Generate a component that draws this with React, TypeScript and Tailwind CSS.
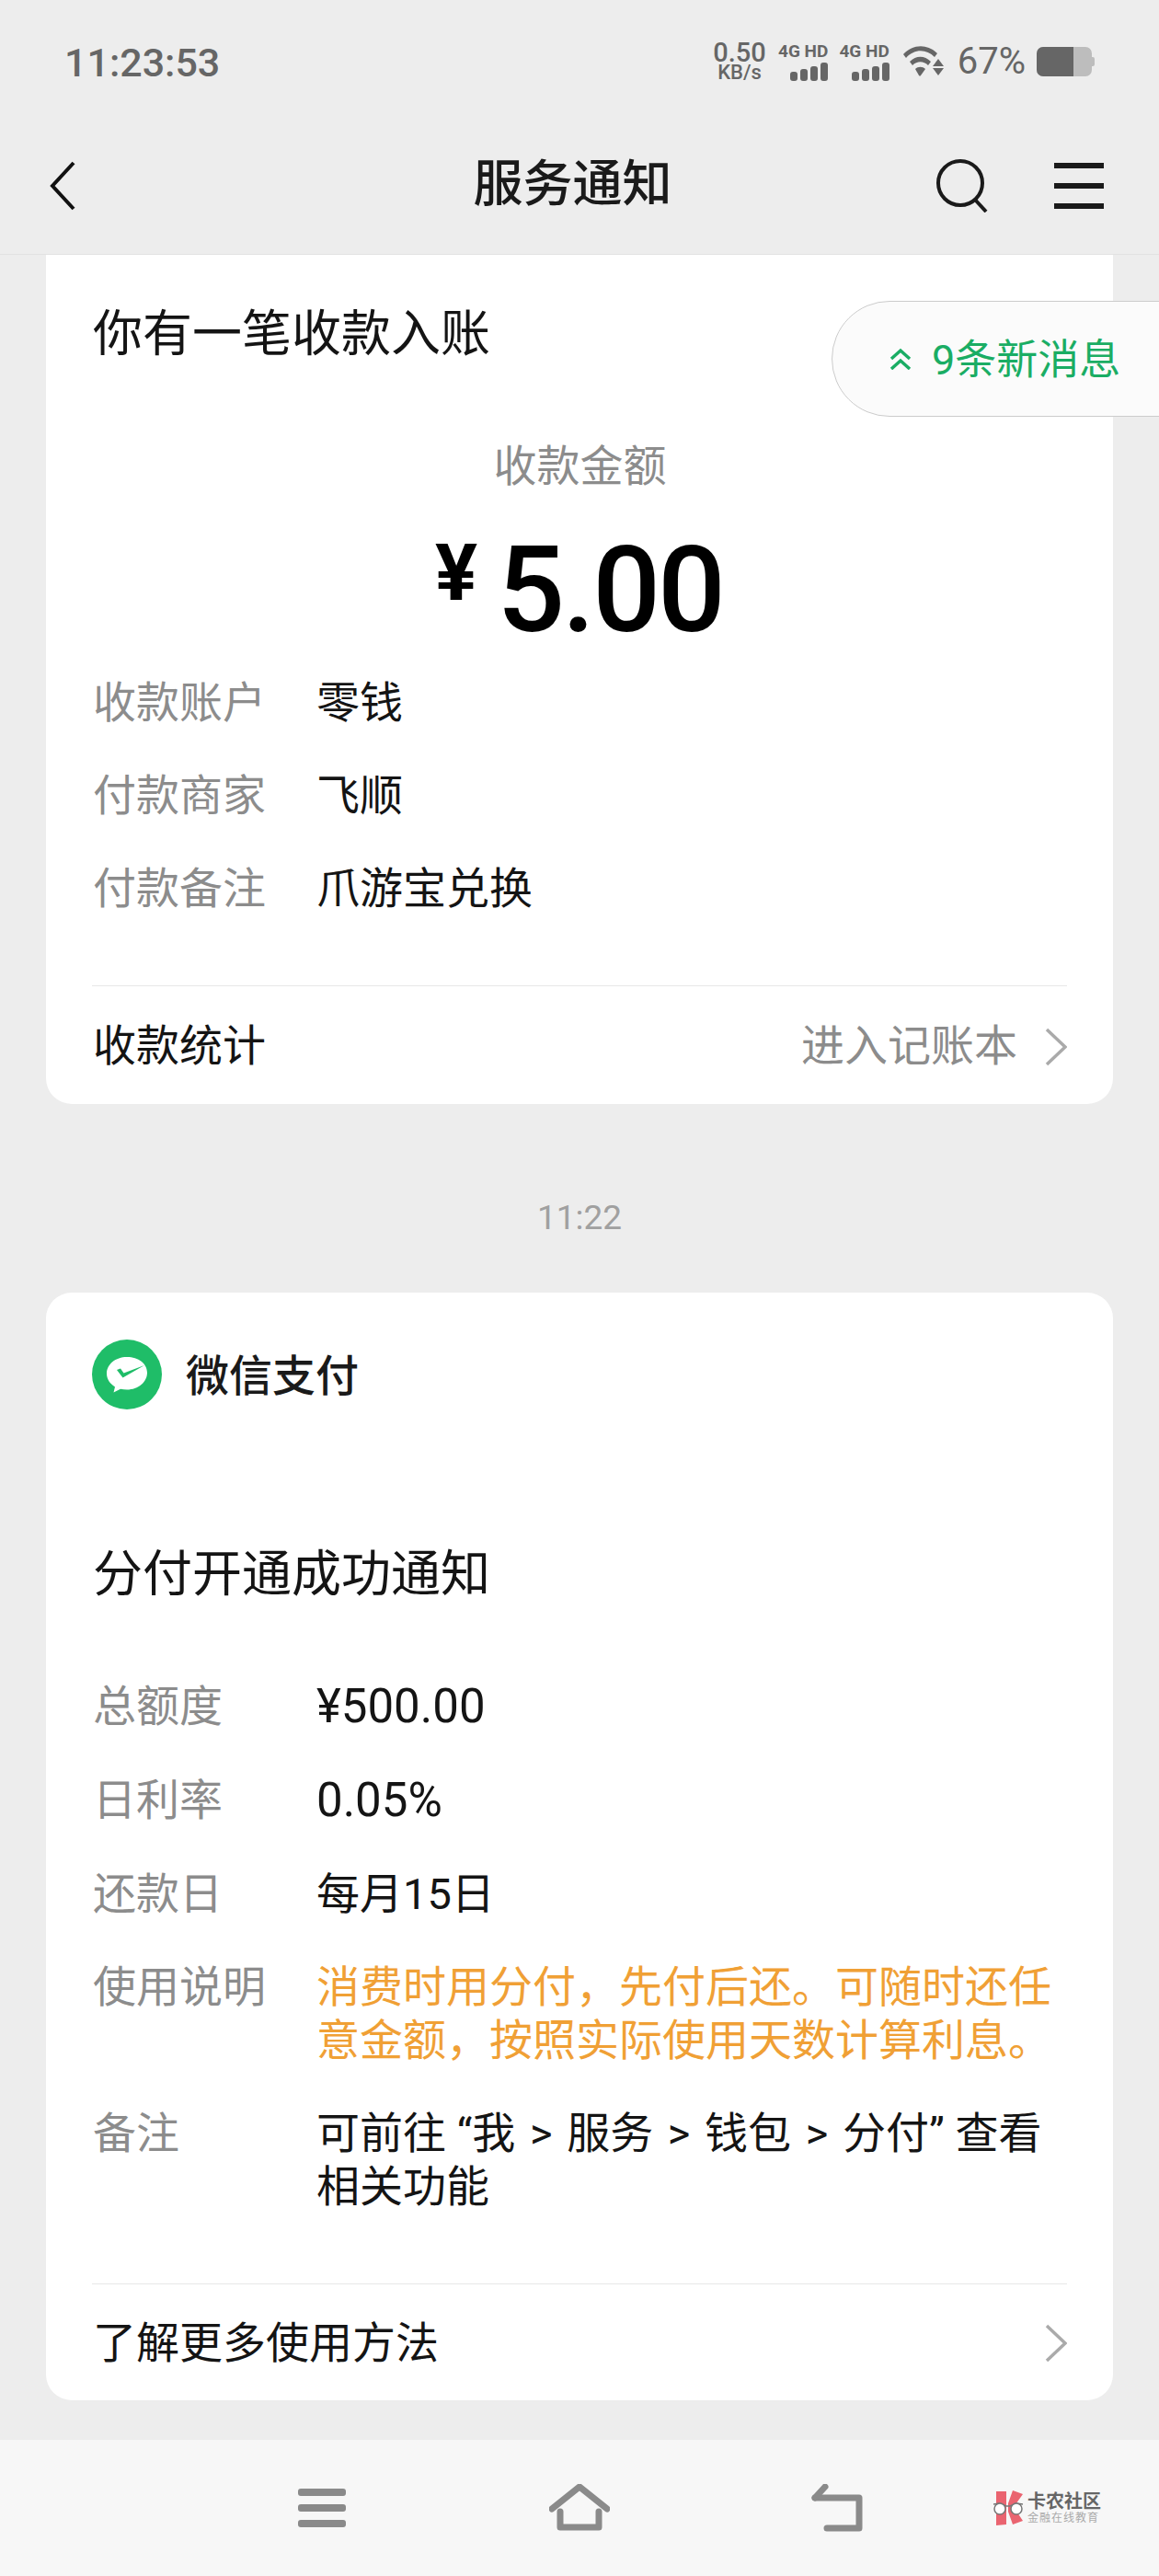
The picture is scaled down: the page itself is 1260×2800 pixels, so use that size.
const cjk = "font-['Roboto','Noto_Sans_CJK_SC',sans-serif]";

function Chevron() {
  return (
    <svg width="24" height="42" viewBox="0 0 24 42" fill="none">
      <path d="M2 2l20 19L2 40" stroke="#aaaaaa" strokeWidth="3.5" />
    </svg>
  );
}

function Signal() {
  return (
    <div className="flex flex-col items-end">
      <span className="text-[19px] leading-[18px] font-bold text-[#666] whitespace-nowrap">4G HD</span>
      <div className="flex items-end gap-[3px] mt-[3px] h-[20px]">
        <span className="w-[8px] h-[10px] rounded-[3px] bg-[#666]" />
        <span className="w-[8px] h-[13px] rounded-[3px] bg-[#666]" />
        <span className="w-[8px] h-[16px] rounded-[3px] bg-[#666]" />
        <span className="w-[8px] h-[20px] rounded-[3px] bg-[#666]" />
      </div>
    </div>
  );
}

function StatusBar() {
  return (
    <div className="h-[134px] flex items-center justify-between pl-[70px] pr-[70px]">
      <span className="text-[43px] font-medium text-[#666] mt-[2px]">11:23:53</span>
      <div className="flex items-center text-[#666]">
        <div className="flex flex-col items-center w-[58px]">
          <span className="text-[29px] leading-[24px] font-medium">0.50</span>
          <span className="text-[22px] leading-[20px] font-medium">KB/s</span>
        </div>
        <div className="ml-[13px]"><Signal /></div>
        <div className="ml-[12px]"><Signal /></div>
        <svg className="ml-[15px]" width="44" height="34" viewBox="0 0 44 34" fill="#666">
          <path d="M0 9C10-2 26-3 37 8l-3 4C25 3 12 3 3 13z" />
          <path d="M7 17c7-7 16-7 23 0l-3 4c-5-5-12-5-17 0z" />
          <path d="M13 25c3-3 8-3 11 0l-5 7c-1 1-1 1-2 0z" />
          <path d="M38 14l6 8H32zM32 24h12l-6 8z" />
        </svg>
        <span className="ml-[15px] text-[40px] leading-none">67%</span>
        <div className="ml-[12px] flex items-center">
          <div className="w-[60px] h-[32px] rounded-[7px] bg-[#bdbdbd] overflow-hidden">
            <div className="w-[40px] h-full bg-[#666]" />
          </div>
          <div className="w-[3px] h-[10px] rounded-r-[2px] bg-[#bdbdbd]" />
        </div>
      </div>
    </div>
  );
}

function Header() {
  return (
    <div className="h-[143px] shrink-0 border-b border-[#e2e2e2] flex items-center pl-[54px] pr-[60px]">
      <svg width="28" height="54" viewBox="0 0 28 54" fill="none" className="-mt-[6px]">
        <path d="M26 2L3 27l23 25" stroke="#111" strokeWidth="4" />
      </svg>
      <div className="flex-1 text-center text-[54px] leading-none font-medium text-[#1a1a1a] -mt-[8px] pl-[146px]">服务通知</div>
      <svg width="58" height="58" viewBox="0 0 58 58" fill="none" className="-mt-[6px]">
        <circle cx="27" cy="26" r="24" stroke="#1a1a1a" strokeWidth="4" />
        <path d="M43 44l12 13" stroke="#1a1a1a" strokeWidth="4" />
      </svg>
      <div className="ml-[71px] w-[54px] h-[50px] flex flex-col justify-between -mt-[6px]">
        <span className="h-[6px] bg-[#1a1a1a]" />
        <span className="h-[6px] bg-[#1a1a1a]" />
        <span className="h-[6px] bg-[#1a1a1a]" />
      </div>
    </div>
  );
}

function Row({ label, children, orange }: { label: string; children: React.ReactNode; orange?: boolean }) {
  return (
    <div className="grid grid-cols-[243px_1fr] text-[47px] leading-[58px]">
      <span className="text-[#8c8c8c]">{label}</span>
      <span className={orange ? "text-[#f0a035]" : "text-[#141414]"}>{children}</span>
    </div>
  );
}

function WechatPay() {
  return (
    <svg width="76" height="76" viewBox="0 0 76 76">
      <circle cx="38" cy="38" r="38" fill="#1fbd68" />
      <path d="M38 19c-12.500 0-22 8-22 18 0 6 3.500 11 9 14.500l-1.500 6 7.500-3.700c2.300.500 4.600.700 7 .700 12.500 0 22-8.500 22-18.500S50.500 19 38 19z" fill="#fff" />
      <path d="M27 33l4-1.500 3.500 5L57 28 33.500 41.500z" fill="#1fbd68" />
    </svg>
  );
}

function Logo() {
  return (
    <div className="flex items-center">
      <svg width="36" height="38" viewBox="0 0 36 38">
        <path d="M5 1h11v36L5 38zM18 14L23 0l11 4-10 14 10 15-11 4-5-14z" fill="#ea6470" />
        <path d="M2 15l7-1 7 3 4 0 7-3 7 1" fill="none" stroke="#777" strokeWidth="1.500" />
        <circle cx="9" cy="20" r="6" fill="#fff" stroke="#777" strokeWidth="1.500" />
        <circle cx="27" cy="20" r="6" fill="#fff" stroke="#777" strokeWidth="1.500" />
      </svg>
      <div className="ml-[3px] flex flex-col items-start">
        <span className="text-[20px] leading-[21px] font-bold text-[#666]">卡农社区</span>
        <span className="text-[12px] leading-[14px] tracking-[1px] text-[#aaa]">金融在线教育</span>
      </div>
    </div>
  );
}

const Arrow = () => <span className="[word-spacing:4px]"> &gt; </span>;

export default function App() {
  return (
    <div className={`${cjk} relative w-[1260px] h-[2800px] bg-[#ededed] flex flex-col overflow-hidden`}>
      <StatusBar />
      <Header />

      <div className="flex-1 px-[50px]">
        <div className="bg-white rounded-b-[28px] pt-[57px] pl-[51px] pr-[50px]">
          <div className="text-[54px] leading-[60px] text-[#141414]">你有一笔收款入账</div>
          <div className="mt-[84px] text-center text-[47px] leading-[58px] text-[#8c8c8c]">收款金额</div>
          <div className="mt-[41px] h-[130px] flex justify-center items-center font-medium text-black pr-[2px]">
            <span className="text-[86px] leading-none font-bold -mt-[38px]">¥</span>
            <span className="ml-[21px] text-[130px] leading-none tracking-[-3px]">5.00</span>
          </div>
          <div className="mt-[28px] flex flex-col gap-[43px]">
            <Row label="收款账户">零钱</Row>
            <Row label="付款商家">飞顺</Row>
            <Row label="付款备注">爪游宝兑换</Row>
          </div>
          <div className="mt-[76px] -ml-[1px] border-t border-[#e8e8e8] h-[129px] pt-[3px] flex items-center justify-between text-[47px]">
            <span className="ml-[1px] text-[#141414]">收款统计</span>
            <div className="flex items-center gap-[30px] text-[#8c8c8c]">
              <span>进入记账本</span>
              <Chevron />
            </div>
          </div>
        </div>

        <div className="mt-[99px] mb-[56px] text-center text-[37px] leading-[50px] text-[#a0a0a0]">11:22</div>

        <div className="bg-white rounded-[28px] pt-[51px] pl-[51px] pr-[50px]">
          <div className="-ml-[1px] flex items-center gap-[26px]">
            <WechatPay />
            <span className="text-[47px] leading-none font-medium text-[#1a1a1a] mt-[3px]">微信支付</span>
          </div>
          <div className="mt-[150px] text-[54px] leading-[60px] text-[#141414]">分付开通成功通知</div>
          <div className="mt-[84px] flex flex-col gap-[43px]">
            <Row label="总额度"><span className="text-[51px]">¥500.00</span></Row>
            <Row label="日利率"><span className="text-[51px]">0.05%</span></Row>
            <Row label="还款日">每月15日</Row>
            <Row label="使用说明" orange>
              消费时用分付，先付后还。可随时还任<br />意金额，按照实际使用天数计算利息。
            </Row>
            <Row label="备注">可前往 “我<Arrow />服务<Arrow />钱包<Arrow />分付” 查看<br />相关功能</Row>
          </div>
          <div className="mt-[76px] -ml-[1px] border-t border-[#e8e8e8] h-[127px] pt-[2px] flex items-center justify-between text-[47px]">
            <span className="ml-[1px] text-[#141414]">了解更多使用方法</span>
            <Chevron />
          </div>
        </div>
      </div>

      <div className="h-[148px] shrink-0 bg-[#f7f7f7] relative flex items-center">
        <div className="ml-[324px] w-[52px] h-[42px] flex flex-col justify-between">
          <span className="h-[8px] rounded-[3px] bg-[#8a8a8a]" />
          <span className="h-[8px] rounded-[3px] bg-[#8a8a8a]" />
          <span className="h-[8px] rounded-[3px] bg-[#8a8a8a]" />
        </div>
        <svg className="ml-[221px]" width="66" height="52" viewBox="0 0 66 52" fill="none" stroke="#8a8a8a" strokeWidth="7" strokeLinejoin="round" strokeLinecap="round">
          <path d="M3 27L33 3l30 24" />
          <path d="M12 30v17h42V30" />
        </svg>
        <svg className="ml-[219px]" width="58" height="52" viewBox="0 0 58 52" fill="none" stroke="#8a8a8a" strokeWidth="7" strokeLinejoin="round" strokeLinecap="round">
          <path d="M4 15h48v33H17" />
          <path d="M15 3L4 15" />
        </svg>
        <div className="ml-[138px]"><Logo /></div>
      </div>

      <div className="absolute left-[904px] top-[327px] w-[370px] h-[126px] rounded-l-[63px] border border-[#cccccc] bg-[#fbfbfb] flex items-center pl-[62px]">
        <svg width="24" height="24" viewBox="0 0 24 24" fill="none" stroke="#1aad64" strokeWidth="3.500">
          <path d="M2 12l10-9 10 9M2 23l10-9 10 9" />
        </svg>
        <span className="ml-[22px] text-[45px] leading-none text-[#1aad64] mt-[2px]">9条新消息</span>
      </div>
    </div>
  );
}
